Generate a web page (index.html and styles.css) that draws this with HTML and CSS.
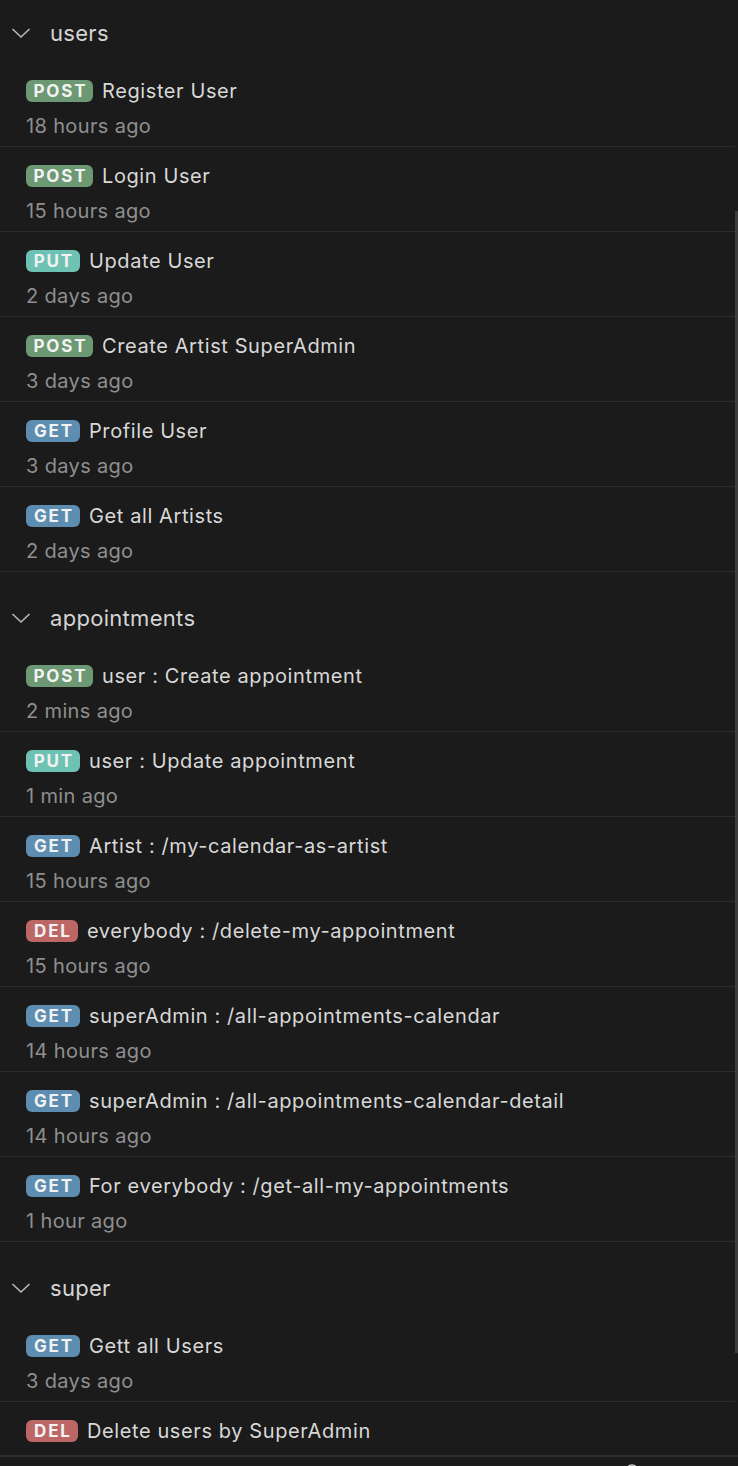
FILE: index.html
```html
<!DOCTYPE html>
<html>
<head>
<meta charset="utf-8">
<link rel="stylesheet" href="styles.css">
</head>
<body>
<div class="app">
  <div class="main">
    <div class="list">
      <section class="section first">
        <div class="header"><svg class="chev" width="20" height="12" viewBox="0 0 20 12"><path d="M1.5 2 L10 10 L18.5 2" fill="none" stroke="#b8b8b8" stroke-width="1.6"/></svg><span>users</span></div>
        <div class="row"><div class="title"><span class="badge post">POST</span>Register User</div><div class="time">18 hours ago</div></div>
        <div class="row"><div class="title"><span class="badge post">POST</span>Login User</div><div class="time">15 hours ago</div></div>
        <div class="row"><div class="title"><span class="badge put">PUT</span>Update User</div><div class="time">2 days ago</div></div>
        <div class="row"><div class="title"><span class="badge post">POST</span>Create Artist SuperAdmin</div><div class="time">3 days ago</div></div>
        <div class="row"><div class="title"><span class="badge get">GET</span>Profile User</div><div class="time">3 days ago</div></div>
        <div class="row"><div class="title"><span class="badge get">GET</span>Get all Artists</div><div class="time">2 days ago</div></div>
      </section>
      <section class="section">
        <div class="header"><svg class="chev" width="20" height="12" viewBox="0 0 20 12"><path d="M1.5 2 L10 10 L18.5 2" fill="none" stroke="#b8b8b8" stroke-width="1.6"/></svg><span>appointments</span></div>
        <div class="row"><div class="title"><span class="badge post">POST</span>user : Create appointment</div><div class="time">2 mins ago</div></div>
        <div class="row"><div class="title"><span class="badge put">PUT</span>user : Update appointment</div><div class="time">1 min ago</div></div>
        <div class="row"><div class="title"><span class="badge get">GET</span>Artist : /my-calendar-as-artist</div><div class="time">15 hours ago</div></div>
        <div class="row"><div class="title"><span class="badge del">DEL</span>everybody : /delete-my-appointment</div><div class="time">15 hours ago</div></div>
        <div class="row"><div class="title"><span class="badge get">GET</span>superAdmin : /all-appointments-calendar</div><div class="time">14 hours ago</div></div>
        <div class="row"><div class="title"><span class="badge get">GET</span>superAdmin : /all-appointments-calendar-detail</div><div class="time">14 hours ago</div></div>
        <div class="row"><div class="title"><span class="badge get">GET</span>For everybody : /get-all-my-appointments</div><div class="time">1 hour ago</div></div>
      </section>
      <section class="section">
        <div class="header"><svg class="chev" width="20" height="12" viewBox="0 0 20 12"><path d="M1.5 2 L10 10 L18.5 2" fill="none" stroke="#b8b8b8" stroke-width="1.6"/></svg><span>super</span></div>
        <div class="row"><div class="title"><span class="badge get">GET</span>Gett all Users</div><div class="time">3 days ago</div></div>
        <div class="row"><div class="title"><span class="badge del">DEL</span>Delete users by SuperAdmin</div><div class="time">2 days ago</div></div>
      </section>
    </div>
    <div class="track"><div class="thumb"></div></div>
  </div>
  <footer class="footer">
    <svg width="14" height="14" viewBox="0 0 14 14"><circle cx="7" cy="7" r="6" fill="none" stroke="#cfcfcf" stroke-width="1.4"/></svg>
    <span class="ftext">0</span>
    <span class="ftext">0 Issues</span>
  </footer>
</div>
</body>
</html>
```
FILE: styles.css
```css
html, body {
  margin: 0;
  padding: 0;
  background: #1b1b1b;
}
body {
  font-family: Inter, "Noto Sans", sans-serif;
  color: #d6d6d6;
  width: 738px;
  height: 1466px;
  overflow: hidden;
}
.app {
  display: flex;
  flex-direction: column;
  height: 1466px;
  overflow: hidden;
}
.main {
  flex: none;
  display: flex;
  height: 1455px;
  overflow: hidden;
  border-bottom: 2px solid #2e2e2e;
}
.list {
  flex: 1;
  min-width: 0;
}
.track {
  width: 3px;
  flex: none;
}
.thumb {
  margin-top: 211px;
  height: 1142px;
  background: #3d3d3d;
}
.section {
  margin-top: 13px;
}
.section.first {
  margin-top: 0;
}
.header {
  display: flex;
  align-items: center;
  padding: 21px 0 17px 11px;
  height: 24px;
  font-size: 22px;
  line-height: 24px;
  letter-spacing: 0.3px;
  color: #d4d4d4;
}
.chev {
  margin-right: 19px;
}
.row {
  padding: 17px 0 8px 26px;
  border-bottom: 1px solid #2b2b2b;
}
.title {
  display: flex;
  align-items: center;
  height: 24px;
  font-size: 20px;
  line-height: 24px;
  letter-spacing: 0.6px;
  color: #d8d8d8;
  white-space: nowrap;
}
.time {
  margin-top: 11px;
  height: 24px;
  font-size: 20px;
  line-height: 24px;
  letter-spacing: 0.35px;
  color: #8f8f8f;
}
.badge {
  flex: none;
  display: inline-flex;
  align-items: center;
  justify-content: center;
  height: 22px;
  margin-right: 9px;
  border-radius: 6px;
  font-size: 17px;
  font-weight: 700;
  color: #f2f2f2;
  letter-spacing: 1.8px;
  text-indent: 1.8px;
}
.post { background: #6c9873; width: 67px; }
.put { background: #6dc2b3; width: 54px; }
.get { background: #5d8db1; width: 54px; }
.del { background: #bd6666; width: 52px; }
.footer {
  flex: none;
  display: flex;
  justify-content: flex-end;
  align-items: flex-start;
  gap: 8px;
  padding: 7px 24px 0 0;
  font-size: 13px;
  color: #cfcfcf;
  height: 20px;
}
```
